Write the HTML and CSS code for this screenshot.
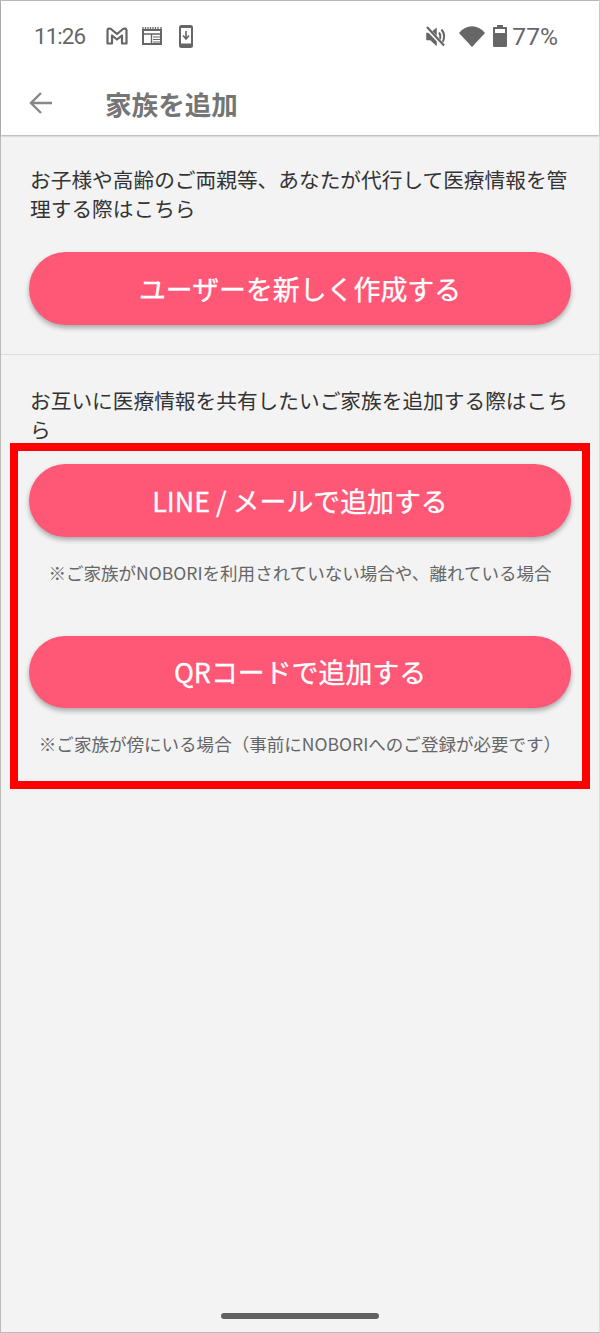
FILE: index.html
```html
<!DOCTYPE HTML>
<html lang="ja">
	<head>
		<meta charset="utf-8">
		<title>家族を追加</title>
		<link rel="stylesheet" href="styles.css">
	</head>
	<body>
		<div class="screen">
			<header class="top">
				<div class="status">
					<span class="time">11:26</span>
					<svg class="ic ic-gmail" width="22" height="18" viewBox="0 0 22 18"><path d="M1.500 16.500V3.500C1.500 1.500 3.500 1 5 2l6 5 6-5c1.500-1 3.500-.5 3.500 1.500v13h-4.500V8.500L11 12.500 6 8.500v8z" fill="none" stroke="#666" stroke-width="2.200" stroke-linejoin="round"/></svg>
					<svg class="ic ic-cal" width="20" height="18" viewBox="0 0 20 18"><path d="M1 3h18v14H1z" fill="none" stroke="#666" stroke-width="2"/><path d="M1 0v2M3.500 0v2M6 0v2M8.500 0v2M11 0v2M13.500 0v2M16 0v2M19 0v2" stroke="#666" stroke-width="1.300"/><path d="M1 7h18M9.500 7v9" stroke="#666" stroke-width="1.400"/><path d="M11 10h7M11 12.500h7M11 15h7" stroke="#666" stroke-width="1.200"/></svg>
					<svg class="ic ic-dl" width="14" height="23" viewBox="0 0 14 23"><rect x="0" y="0" width="14" height="23" rx="2.500" fill="#666"/><rect x="2" y="3" width="10" height="15.500" fill="#fff"/><path d="M7 6v7.500M4 10.500 7 14l3-3.500" fill="none" stroke="#666" stroke-width="1.600"/></svg>
					<span class="spacer"></span>
					<svg class="ic ic-mute" width="19" height="21" viewBox="0 0 19 21"><path d="M1 7.500v6h3.500l5.500 5V3L4.500 7.500z" fill="#666" stroke="#666" stroke-width="1.500"/><path d="M13 6.500c1.800 2.200 1.800 5.800 0 8M15.500 3.500c3.500 4 3.500 10 0 14" fill="none" stroke="#666" stroke-width="2"/><path d="M0 1.500 18 20" stroke="#fff" stroke-width="4"/><path d="M1 1 18 19.500" stroke="#666" stroke-width="2.200"/></svg>
					<svg class="ic ic-wifi" width="26" height="21" viewBox="0 0 26 21"><path d="M0 7C7-2 19-2 26 7L13 21z" fill="#666"/></svg>
					<svg class="ic ic-batt" width="14" height="22" viewBox="0 0 14 22"><path d="M4 0h6v2h3a1 1 0 0 1 1 1v18a1 1 0 0 1-1 1H1a1 1 0 0 1-1-1V3a1 1 0 0 1 1-1h3z" fill="#666"/><rect x="2" y="4" width="10" height="4" fill="#fff"/></svg>
					<span class="pct">77%</span>
				</div>
				<div class="toolbar">
					<svg class="back" width="24" height="24" viewBox="0 0 24 24"><path d="M23 12H2M12 2 2 12l10 10" fill="none" stroke="#888" stroke-width="2.400"/></svg>
					<h1>家族を追加</h1>
				</div>
			</header>

			<section class="block block-first">
				<p class="lead">お子様や高齢のご両親等、あなたが代行して医療情報を管理する際はこちら</p>
				<a class="btn">ユーザーを新しく作成する</a>
			</section>

			<section class="block block-second">
				<p class="lead">お互いに医療情報を共有したいご家族を追加する際はこちら</p>
				<a class="btn btn-line">LINE / メールで追加する</a>
				<p class="note">※ご家族がNOBORIを利用されていない場合や、離れている場合</p>
				<a class="btn btn-qr">QRコードで追加する</a>
				<p class="note">※ご家族が傍にいる場合（事前にNOBORIへのご登録が必要です）</p>
				<div class="mark"></div>
			</section>

			<div class="home-bar"></div>
		</div>
	</body>
</html>
```

FILE: styles.css
```css
* { margin: 0; padding: 0; box-sizing: border-box; }
html, body {
	height: 100%;
}
body {
	font-family: "Noto Sans CJK JP", "Noto Sans", sans-serif;
	color: #333;
	background: #f3f3f3;
	overflow: hidden;
}
.screen {
	position: relative;
	height: 1333px;
	border: 1px solid #bbb;
	border-right-color: #ddd;
	background: #f3f3f3;
}
.top {
	background: #fff;
	height: 134px;
	box-shadow: 0 1px 2px rgba(0, 0, 0, 0.3);
}
.status {
	display: flex;
	align-items: center;
	height: 70px;
	padding: 0 41px 0 33px;
	color: #666;
}
.time {
	font-family: Roboto, sans-serif;
	font-size: 22.5px;
	width: 72px;
	letter-spacing: -1px;
}
.pct {
	font-family: Roboto, sans-serif;
	font-size: 24.6px;
}
.spacer { flex: 1; }
.ic { display: block; flex: none; }
.ic-cal { margin-left: 14px; }
.ic-dl { margin-left: 17px; }
.ic-wifi { margin-left: 14px; }
.ic-batt { margin-left: 8px; margin-right: 5px; }
.toolbar {
	display: flex;
	align-items: center;
	height: 64px;
	padding-left: 28px;
}
.back { flex: none; }
.toolbar h1 {
	font-size: 26.6px;
	font-weight: 700;
	color: #757575;
	margin-left: 52px;
	padding-top: 2px;
	line-height: 1;
}
.block {
	padding: 0 28px;
}
.block-first {
	padding-top: 30px;
	height: 220px;
	border-bottom: 1px solid #ddd;
}
.block-second {
	position: relative;
	padding-top: 31px;
}
.lead {
	font-size: 20.7px;
	line-height: 29px;
	margin-right: -2px;
	padding-left: 1px;
}
.btn {
	display: flex;
	align-items: center;
	justify-content: center;
	height: 72.5px;
	border-radius: 37px;
	background: #ff5776;
	color: #fff;
	font-size: 26.9px;
	-webkit-text-stroke: 0.3px #fff;
	box-shadow: 0 3px 5px rgba(0, 0, 0, 0.3);
}
.block-first .btn { margin-top: 29px; }
.btn-line { margin-top: 20px; }
.btn-qr { margin-top: 51px; }
.note {
	font-size: 17.55px;
	line-height: 24px;
	color: #666;
	text-align: center;
	margin: 24px -10px 0;
	white-space: nowrap;
}
.mark {
	position: absolute;
	left: 9px;
	top: 88px;
	width: 580px;
	height: 346px;
	border: 8px solid #f00;
}
.home-bar {
	position: absolute;
	left: 220px;
	top: 1312px;
	width: 158px;
	height: 6px;
	border-radius: 3px;
	background: #606060;
}
```
